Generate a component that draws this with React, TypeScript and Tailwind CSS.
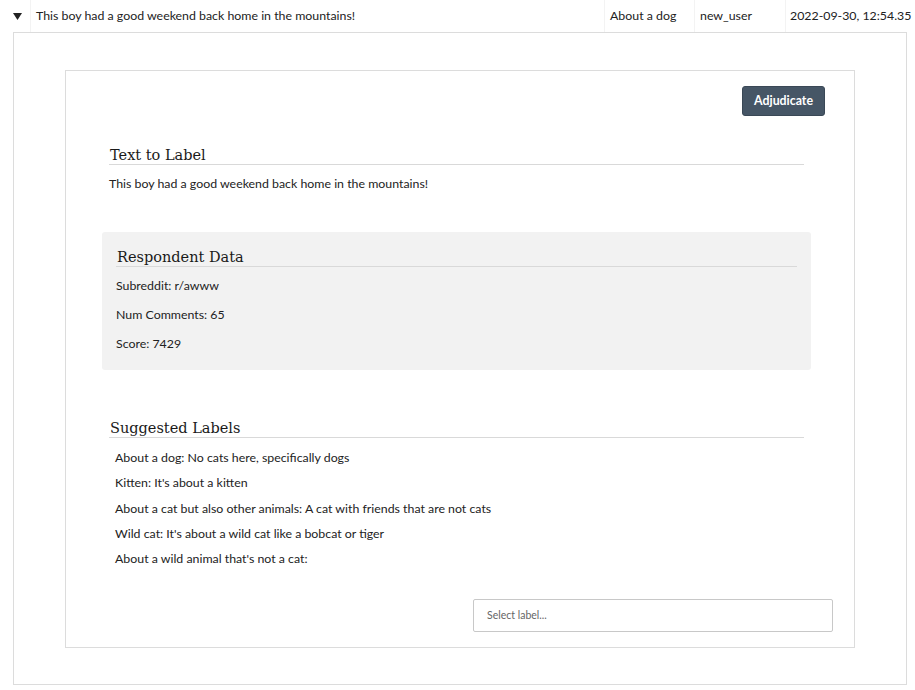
import React from "react";

const labels = [
  "About a dog: No cats here, specifically dogs",
  "Kitten: It's about a kitten",
  "About a cat but also other animals: A cat with friends that are not cats",
  "Wild cat: It's about a wild cat like a bobcat or tiger",
  "About a wild animal that's not a cat:",
];

const body = { fontFamily: "Lato, 'Noto Sans', sans-serif" };
const slab = { fontFamily: "'DejaVu Serif', 'Liberation Serif', serif" };

function Heading({ children }: { children: React.ReactNode }) {
  return (
    <div
      style={slab}
      className="h-[21px] flex items-end border-b border-[#d9d9d9] text-[14.5px] leading-[17px] text-[#1a1a1a] pl-px"
    >
      {children}
    </div>
  );
}

export default function App() {
  return (
    <div style={body} className="w-[915px] h-[690px] bg-white text-[12.35px] text-[#222]">
      {/* row header */}
      <div className="flex h-8 items-center whitespace-nowrap">
        <div className="w-[30px] h-full flex items-center justify-center">
          <svg width="9" height="7" viewBox="0 0 9 7" className="ml-[5px]">
            <polygon points="0,0 9,0 4.5,7" fill="#222" />
          </svg>
        </div>
        <div className="flex-1 h-full flex items-center pl-[5px] border-l border-[#f3f3f3]">
          This boy had a good weekend back home in the mountains!
        </div>
        <div className="w-[90px] h-full flex items-center pl-[5px] border-l border-[#f3f3f3]">
          About a dog
        </div>
        <div className="w-[91px] h-full flex items-center pl-[5px] border-l border-[#f3f3f3]">
          new_user
        </div>
        <div className="w-[130px] h-full flex items-center pl-[4px] border-l border-[#f3f3f3]">
          2022-09-30, 12:54.35
        </div>
      </div>

      {/* expanded panel */}
      <div className="ml-[13px] w-[894px] h-[653px] border border-[#dcdcdc] pt-[37px] pl-[51px]">
        <div className="w-[790px] h-[578px] border border-[#dcdcdc] flex flex-col">
          <div className="flex justify-end pt-[15px] pr-[29px]">
            <button className="h-[30px] px-[11px] rounded-[3px] bg-[#465666] text-white font-bold text-[12.35px] border border-[#3a4856]">
              Adjudicate
            </button>
          </div>

          <div className="ml-[43px] mr-[50px] mt-[28px]">
            <Heading>Text to Label</Heading>
            <div className="mt-[10px] leading-[17px]">
              This boy had a good weekend back home in the mountains!
            </div>
          </div>

          <div className="ml-[36px] mr-[43px] mt-[40px] h-[138px] bg-[#f2f2f2] rounded-[3px] px-[14px] pt-[14px]">
            <Heading>Respondent Data</Heading>
            <div className="mt-[10px] flex flex-col gap-[12px] leading-[17px]">
              <div>Subreddit: r/awww</div>
              <div>Num Comments: 65</div>
              <div>Score: 7429</div>
            </div>
          </div>

          <div className="ml-[43px] mr-[50px] mt-[47px]">
            <Heading>Suggested Labels</Heading>
            <div className="mt-[11px] flex flex-col gap-[8.3px] leading-[17px] pl-[6px]">
              {labels.map((l) => (
                <div key={l}>{l}</div>
              ))}
            </div>
          </div>

          <div className="flex justify-end pr-[21px] mt-[32px]">
            <div className="w-[360px] h-[33px] border border-[#c8c8c8] rounded-[2px] flex items-center pl-[13px] text-[10.5px] text-[#666]">
              Select label...
            </div>
          </div>
        </div>
      </div>
    </div>
  );
}
